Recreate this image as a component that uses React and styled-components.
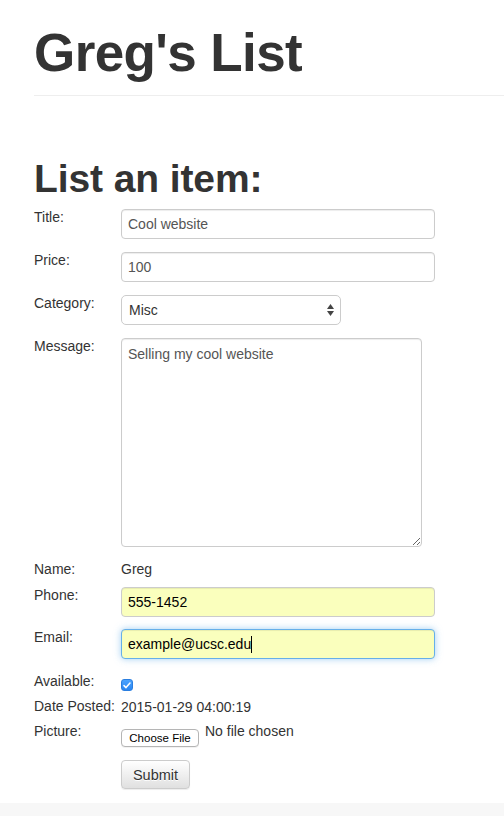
import React from "react";
import styled, { createGlobalStyle } from "styled-components";

const Global = createGlobalStyle`
  html, body { margin: 0; padding: 0; background: #fff; }
  body {
    font-family: "Liberation Sans", Arial, Helvetica, sans-serif;
    font-size: 14px;
    color: #333;
  }
  * { box-sizing: border-box; }
`;

const Page = styled.div`
  min-height: 816px;
  display: flex;
  flex-direction: column;
`;

const Container = styled.div`
  padding-left: 34px;
`;

const PageHeader = styled.header`
  padding-top: 24px;
  padding-bottom: 13px;
  border-bottom: 1px solid #eee;
`;

const Title = styled.h1`
  margin: 0;
  font-family: "Liberation Sans", Arial, sans-serif;
  font-weight: 700;
  font-size: 53px;
  line-height: 58px;
  letter-spacing: -0.6px;
  color: #333;
`;

const SubTitle = styled.h2`
  margin: 61px 0 9px;
  font-weight: 700;
  font-size: 39px;
  line-height: 43px;
  letter-spacing: -0.1px;
  color: #333;
`;

const Form = styled.form`
  display: flex;
  flex-direction: column;
`;

const Row = styled.div`
  display: grid;
  grid-template-columns: 87px auto;
  align-items: start;
  min-height: ${(p) => p.$minH || 0}px;
  margin-bottom: ${(p) => p.$mb || 0}px;
`;

const Label = styled.label`
  font-size: 14px;
  line-height: 17px;
  color: #333;
  white-space: nowrap;
`;

const Value = styled.div`
  font-size: 14px;
  line-height: 17px;
  color: #333;
  margin-top: ${(p) => p.$mt || 0}px;
`;

const TextInput = styled.input`
  display: block;
  width: ${(p) => p.$w || 314}px;
  height: 30px;
  padding: 0 6px;
  font-family: "Liberation Sans", Arial, sans-serif;
  font-size: 14px;
  color: ${(p) => (p.$autofill ? "#000" : "#555")};
  background: ${(p) => (p.$autofill ? "#faffbd" : "#fff")};
  border: 1px solid ${(p) => (p.$focus ? "#66afe9" : "#ccc")};
  border-radius: 4px;
  box-shadow: inset 0 1px 1px rgba(0, 0, 0, 0.075)
    ${(p) => (p.$focus ? ", 0 0 7px rgba(102, 175, 233, 0.6)" : "")};
  outline: none;
`;

const FieldWrap = styled.div`
  position: relative;
  width: ${(p) => p.$w}px;
`;

const Caret = styled.span`
  position: absolute;
  left: 130px;
  top: 7px;
  width: 1px;
  height: 17px;
  background: #000;
`;

const Select = styled.select`
  display: block;
  width: 220px;
  height: 30px;
  padding: 0 7px;
  font-family: "Liberation Sans", Arial, sans-serif;
  font-size: 14px;
  color: #333;
  background: #fff;
  border: 1px solid #ccc;
  border-radius: 5px;
  appearance: none;
  -webkit-appearance: none;
  outline: none;
`;

const SelectArrows = styled.svg`
  position: absolute;
  right: 7px;
  top: 9px;
  pointer-events: none;
`;

const TextArea = styled.textarea`
  display: block;
  width: 301px;
  height: 209px;
  padding: 5px 6px;
  font-family: "Liberation Sans", Arial, sans-serif;
  font-size: 14px;
  line-height: 20px;
  color: #555;
  border: 1px solid #ccc;
  border-radius: 4px;
  box-shadow: inset 0 1px 1px rgba(0, 0, 0, 0.075);
  outline: none;
`;

const CheckBox = styled.span`
  display: flex;
  align-items: center;
  justify-content: center;
  margin-top: 6px;
  width: 12px;
  height: 12px;
  border-radius: 3px;
  background: linear-gradient(#4aa3ff, #2b86f0);
  border: 1px solid #2a7ee0;
`;

const FileControl = styled.div`
  display: flex;
  align-items: flex-start;
  gap: 6px;
`;

const FileButton = styled.button`
  margin-top: 6px;
  height: 18px;
  width: 78px;
  padding: 0;
  font-family: "Liberation Sans", Arial, sans-serif;
  font-size: 11.5px;
  color: #000;
  background: #fff;
  border: 1px solid #b5b5b5;
  border-radius: 4px;
  box-shadow: 0 1px 0 rgba(0, 0, 0, 0.05);
`;

const SubmitButton = styled.button`
  grid-column: 2;
  width: 69px;
  height: 29px;
  padding: 0;
  font-family: "Liberation Sans", Arial, sans-serif;
  font-size: 14.5px;
  color: #333;
  text-shadow: 0 1px 0 #fff;
  background: linear-gradient(to bottom, #fff 0%, #e0e0e0 100%);
  border: 1px solid #ccc;
  border-radius: 4px;
  box-shadow: inset 0 1px 0 rgba(255, 255, 255, 0.15), 0 1px 1px rgba(0, 0, 0, 0.075);
`;

const Footer = styled.footer`
  flex: 1;
  min-height: 13px;
  background: #f7f7f7;
`;

export default function App() {
  return (
    <Page>
      <Global />
      <Container>
        <PageHeader>
          <Title>Greg's List</Title>
        </PageHeader>
        <SubTitle>List an item:</SubTitle>
        <Form onSubmit={(e) => e.preventDefault()}>
          <Row $mb={13}>
            <Label>Title:</Label>
            <TextInput defaultValue="Cool website" />
          </Row>
          <Row $mb={13}>
            <Label>Price:</Label>
            <TextInput defaultValue="100" />
          </Row>
          <Row $mb={13}>
            <Label>Category:</Label>
            <FieldWrap $w={220}>
              <Select defaultValue="Misc">
                <option>Misc</option>
              </Select>
              <SelectArrows width="7" height="12" viewBox="0 0 7 12">
                <path d="M3.5 0 L7 5 H0 Z" fill="#444" />
                <path d="M0 7 H7 L3.5 12 Z" fill="#444" />
              </SelectArrows>
            </FieldWrap>
          </Row>
          <Row $mb={14}>
            <Label>Message:</Label>
            <TextArea defaultValue="Selling my cool website" />
          </Row>
          <Row $mb={9}>
            <Label>Name:</Label>
            <Value>Greg</Value>
          </Row>
          <Row $mb={12}>
            <Label>Phone:</Label>
            <TextInput $autofill defaultValue="555-1452" />
          </Row>
          <Row $mb={14}>
            <Label>Email:</Label>
            <FieldWrap $w={314}>
              <TextInput $autofill $focus defaultValue="example@ucsc.edu" />
              <Caret />
            </FieldWrap>
          </Row>
          <Row $minH={25}>
            <Label>Available:</Label>
            <CheckBox>
              <svg width="8" height="7" viewBox="0 0 8 7">
                <path d="M1 3.6 L3 5.6 L7 1" fill="none" stroke="#fff" strokeWidth="1.5" strokeLinecap="round" strokeLinejoin="round" />
              </svg>
            </CheckBox>
          </Row>
          <Row $minH={25}>
            <Label>Date Posted:</Label>
            <Value $mt={1}>2015-01-29 04:00:19</Value>
          </Row>
          <Row $mb={13}>
            <Label>Picture:</Label>
            <FileControl>
              <FileButton type="button">Choose File</FileButton>
              <Value>No file chosen</Value>
            </FileControl>
          </Row>
          <Row $mb={14}>
            <SubmitButton type="submit">Submit</SubmitButton>
          </Row>
        </Form>
      </Container>
      <Footer />
    </Page>
  );
}
